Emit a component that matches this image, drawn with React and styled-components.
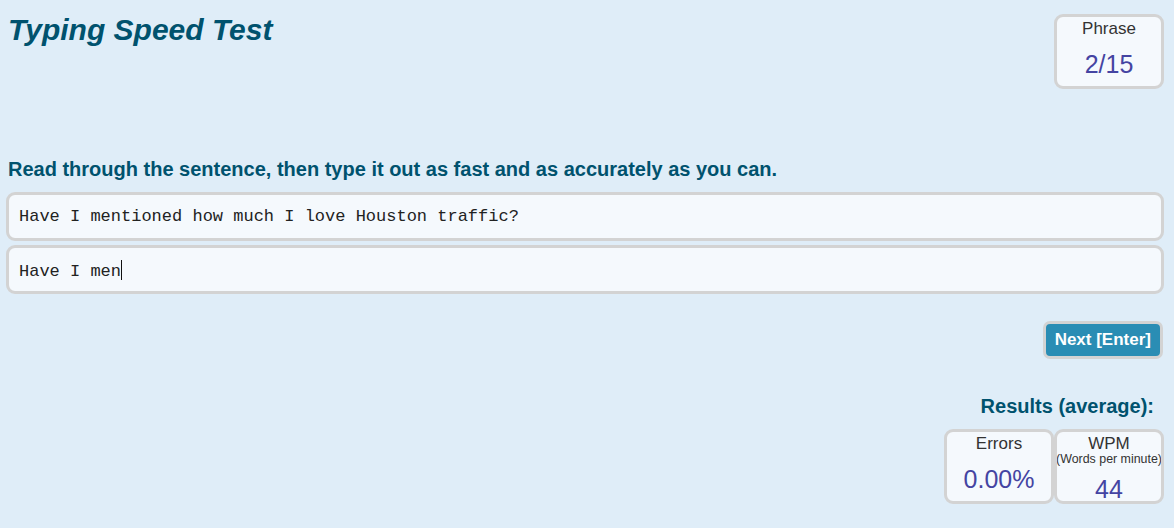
import React from "react";
import styled, { createGlobalStyle } from "styled-components";

const GlobalStyle = createGlobalStyle`
  html, body {
    margin: 0;
    padding: 0;
    background: #dfedf8;
  }
  body {
    font-family: "Liberation Sans", Arial, sans-serif;
  }
`;

const Page = styled.div`
  width: 1174px;
  min-height: 528px;
  box-sizing: border-box;
  padding: 0 10px 0 6px;
  display: flex;
  flex-direction: column;
`;

const Header = styled.header`
  display: flex;
  justify-content: space-between;
  align-items: flex-start;
`;

const Title = styled.h1`
  margin: 13px 0 0 2px;
  font-size: 30px;
  font-style: italic;
  font-weight: bold;
  color: #00526e;
  line-height: 33px;
`;

const StatBox = styled.div`
  width: 110px;
  height: 75px;
  box-sizing: border-box;
  border: 3px solid #d3d3d3;
  border-radius: 9px;
  background: #f5f9fd;
  margin-top: ${(p) => p.$top || 0}px;
  display: flex;
  flex-direction: column;
  align-items: center;
  padding-top: 3px;
  color: #333;
  overflow: hidden;
`;

const StatLabel = styled.div`
  font-size: 17px;
  line-height: 18px;
`;

const StatSub = styled.div`
  font-size: 12.4px;
  line-height: 12px;
  margin-top: 0;
  white-space: nowrap;
`;

const StatValue = styled.div`
  font-size: 25px;
  line-height: 30px;
  margin-top: ${(p) => (p.$compact ? 9 : 11)}px;
  color: #4444a2;
`;

const Instruction = styled.h3`
  margin: 70px 0 0 2px;
  font-size: 20px;
  line-height: 21px;
  font-weight: bold;
  color: #00526e;
`;

const Boxes = styled.div`
  margin-top: 12px;
  display: flex;
  flex-direction: column;
  gap: 4px;
`;

const TextBox = styled.div`
  height: 49px;
  box-sizing: border-box;
  border: 3px solid #d3d3d3;
  border-radius: 9px;
  background: #f5f9fd;
  padding: 12px 10px;
  font-family: "Liberation Mono", "Courier New", monospace;
  font-size: 17px;
  line-height: 19px;
  color: #222;
  white-space: pre;
`;

const Caret = styled.span`
  display: inline-block;
  width: 0;
  height: 20px;
  border-left: 1px solid #111;
  vertical-align: -4px;
`;

const Actions = styled.div`
  display: flex;
  justify-content: flex-end;
  margin-top: 27px;
  padding-right: 1px;
`;

const NextButton = styled.button`
  height: 38px;
  box-sizing: border-box;
  border: 3px solid #d3d3d3;
  border-radius: 7px;
  background: #2a8db4;
  color: #fff;
  font-family: "Liberation Sans", Arial, sans-serif;
  font-size: 17px;
  font-weight: bold;
  padding: 0 9px;
  cursor: pointer;
`;

const Results = styled.section`
  display: flex;
  flex-direction: column;
  align-items: flex-end;
  margin-top: 37px;
`;

const ResultsTitle = styled.h3`
  margin: 0 10px 0 0;
  font-size: 20px;
  line-height: 21px;
  font-weight: bold;
  color: #00526e;
`;

const StatRow = styled.div`
  display: flex;
  margin-top: 12px;
`;

export default function App() {
  return (
    <>
      <GlobalStyle />
      <Page>
        <Header>
          <Title>Typing Speed Test</Title>
          <StatBox $top={14}>
            <StatLabel>Phrase</StatLabel>
            <StatValue>2/15</StatValue>
          </StatBox>
        </Header>
        <Instruction>
          Read through the sentence, then type it out as fast and as accurately as you can.
        </Instruction>
        <Boxes>
          <TextBox>Have I mentioned how much I love Houston traffic?</TextBox>
          <TextBox>
            Have I men<Caret />
          </TextBox>
        </Boxes>
        <Actions>
          <NextButton>Next [Enter]</NextButton>
        </Actions>
        <Results>
          <ResultsTitle>Results (average):</ResultsTitle>
          <StatRow>
            <StatBox>
              <StatLabel>Errors</StatLabel>
              <StatValue>0.00%</StatValue>
            </StatBox>
            <StatBox>
              <StatLabel>WPM</StatLabel>
              <StatSub>(Words per minute)</StatSub>
              <StatValue $compact>44</StatValue>
            </StatBox>
          </StatRow>
        </Results>
      </Page>
    </>
  );
}
